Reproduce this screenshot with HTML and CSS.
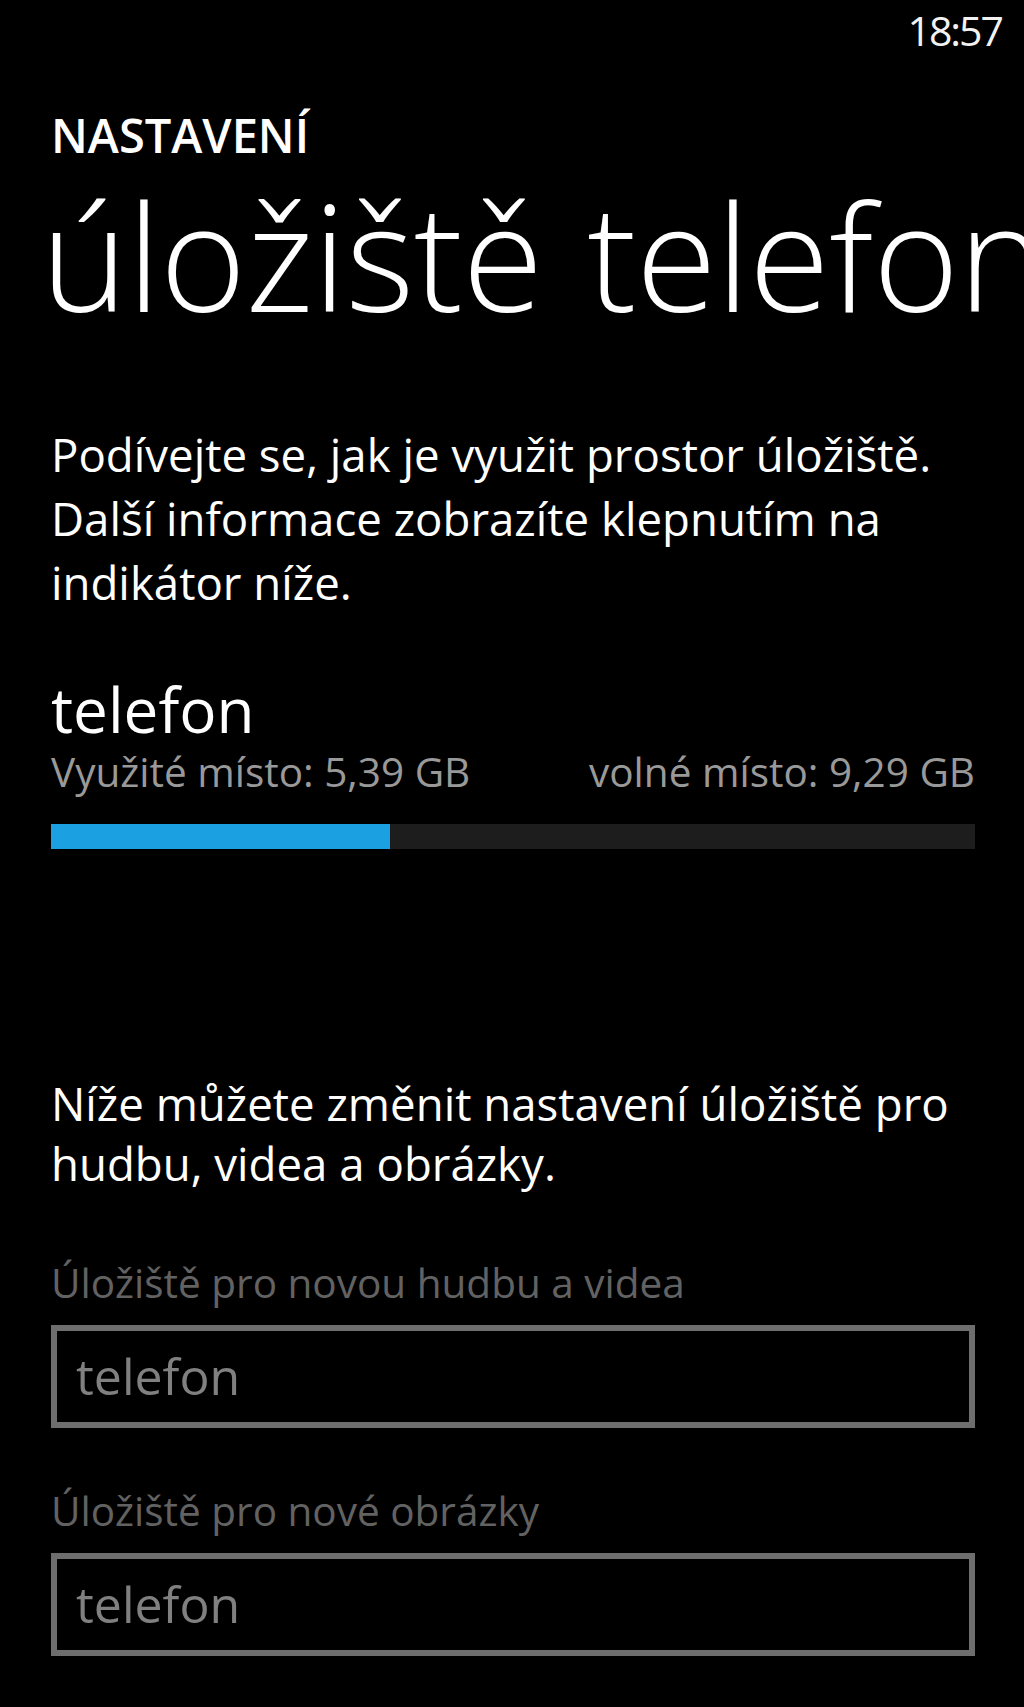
FILE: index.html
```html
<!DOCTYPE html>
<html lang="cs">
<head>
<meta charset="utf-8">
<title>úložiště telefonu</title>
<link rel="stylesheet" href="styles.css">
</head>
<body>
<div class="screen">
  <div class="status-bar"><span class="clock">18:57</span></div>
  <div class="page">
    <div class="app-title">NASTAVENÍ</div>
    <h1 class="page-title">úložiště telefonu</h1>
    <p class="text intro">Podívejte se, jak je využit prostor úložiště. Další informace zobrazíte klepnutím na indikátor níže.</p>
    <div class="storage">
      <div class="storage-name">telefon</div>
      <div class="usage">
        <span>Využité místo: 5,39 GB</span>
        <span>volné místo: 9,29 GB</span>
      </div>
      <div class="meter"><div class="meter-fill" style="width: 36.7%"></div></div>
    </div>
    <p class="text settings-intro">Níže můžete změnit nastavení úložiště pro hudbu, videa a obrázky.</p>
    <div class="field first">
      <div class="field-label">Úložiště pro novou hudbu a videa</div>
      <div class="picker">telefon</div>
    </div>
    <div class="field">
      <div class="field-label">Úložiště pro nové obrázky</div>
      <div class="picker">telefon</div>
    </div>
  </div>
</div>
</body>
</html>
```

FILE: styles.css
```css
html, body {
  margin: 0;
  padding: 0;
  background: #000;
}

body {
  width: 1024px;
  height: 1707px;
  overflow: hidden;
  font-family: "Open Sans", "Noto Sans", "DejaVu Sans", sans-serif;
  color: #fff;
}

.screen {
  width: 1024px;
  height: 1707px;
  overflow: hidden;
}

.status-bar {
  display: flex;
  justify-content: flex-end;
  padding: 10px 22px 0 0;
  height: 40px;
}

.clock {
  font-size: 41px;
  line-height: 40px;
  letter-spacing: -2px;
  color: #f2f2f2;
}

.page {
  padding: 0 49px 0 51px;
}

.app-title {
  margin-top: 60px;
  font-size: 47px;
  line-height: 50px;
  font-weight: 600;
}

.page-title {
  margin: 20px 0 0 -10px;
  font-size: 147px;
  line-height: 150px;
  font-weight: 300;
  white-space: nowrap;
  letter-spacing: -0.5px;
  word-spacing: 7px;
}

.text {
  margin: 0;
  font-size: 45.6px;
}

.intro {
  margin-top: 92px;
  line-height: 64px;
}

.storage {
  margin-top: 63px;
}

.storage-name {
  font-size: 62px;
  line-height: 64px;
}

.usage {
  display: flex;
  justify-content: space-between;
  margin-top: 7px;
  font-size: 40.5px;
  line-height: 48px;
  color: #999;
}

.meter {
  margin-top: 28px;
  height: 25px;
  background: #1d1d1d;
}

.meter-fill {
  height: 100%;
  background: #1ba1e2;
}

.settings-intro {
  margin-top: 224px;
  line-height: 60px;
}

.field.first {
  margin-top: 66px;
}

.field {
  margin-top: 59px;
}

.field-label {
  font-size: 40.5px;
  line-height: 48px;
  color: #626262;
}

.picker {
  margin-top: 18px;
  height: 91px;
  box-sizing: content-box;
  border: 6px solid #6e6e6e;
  padding: 0 19px;
  font-size: 50px;
  line-height: 91px;
  color: #808080;
}
```
